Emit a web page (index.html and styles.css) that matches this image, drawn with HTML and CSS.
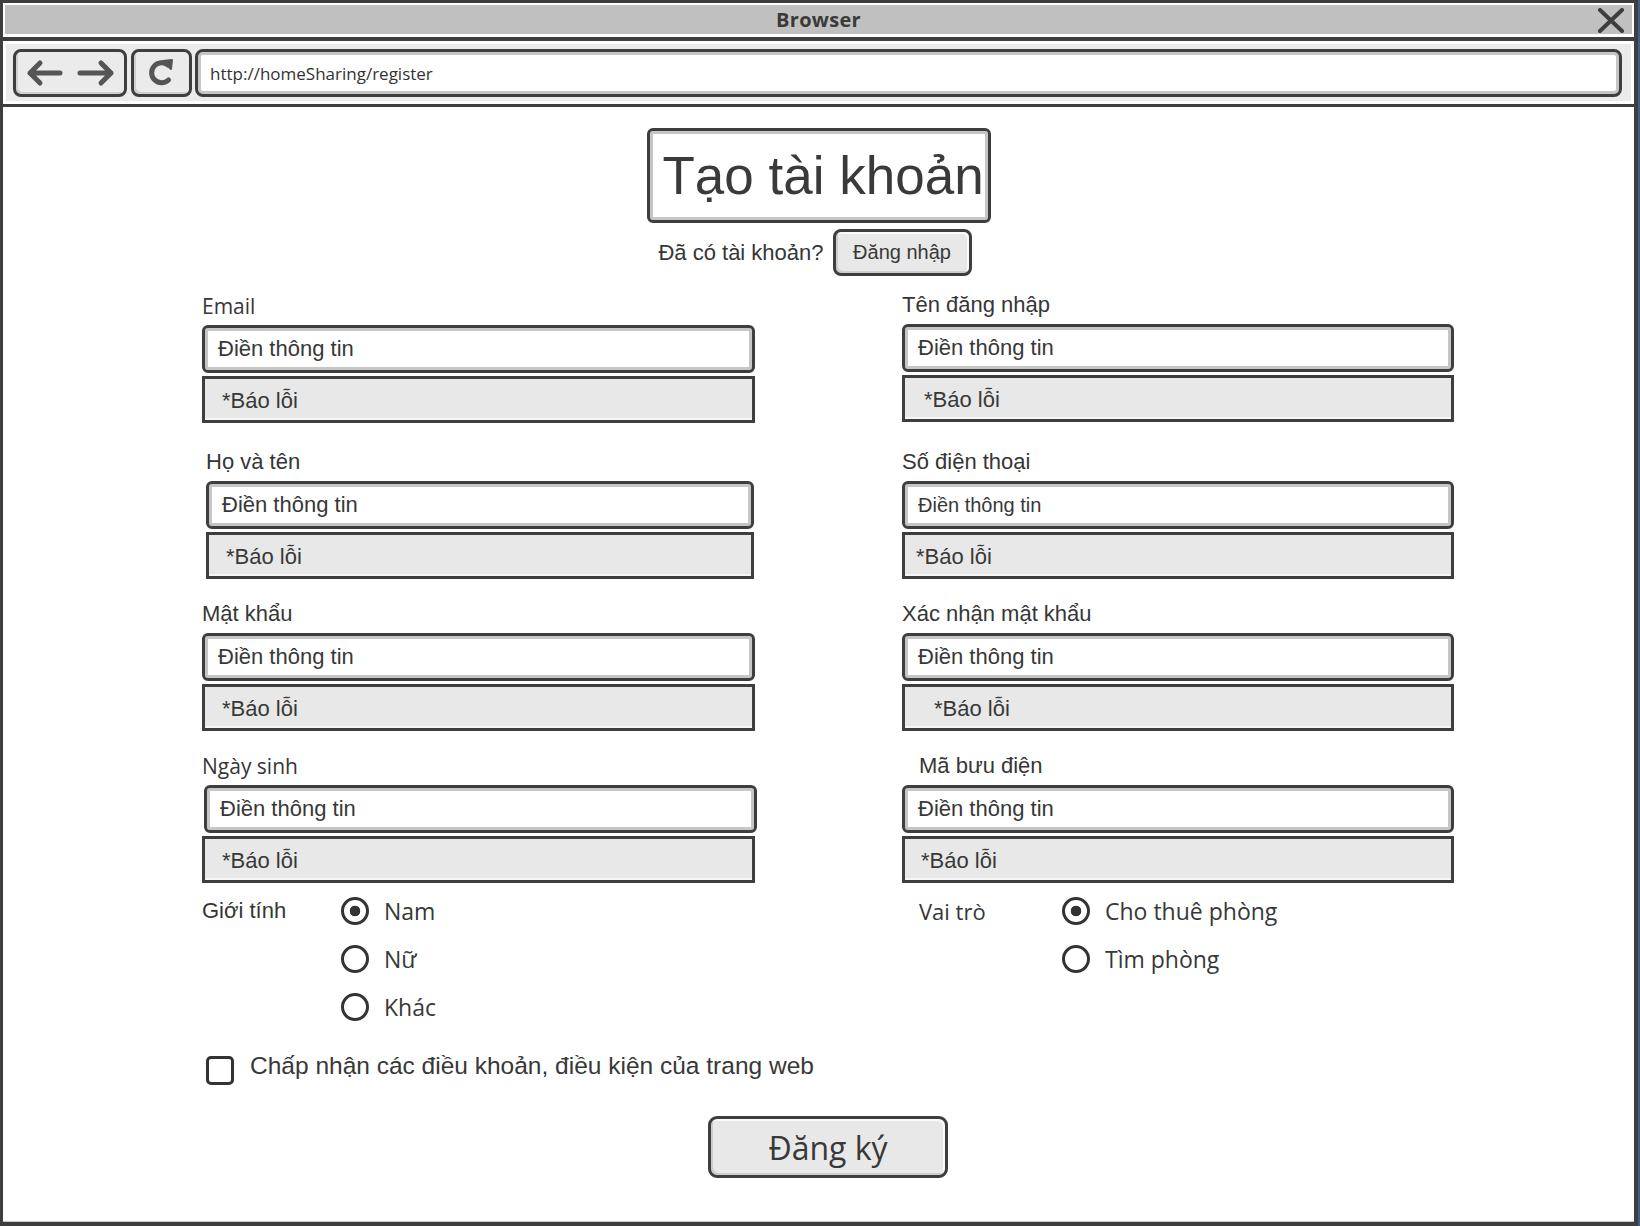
FILE: index.html
```html
<!DOCTYPE html>
<html lang="vi">
<head>
<meta charset="utf-8">
<title>Tạo tài khoản</title>
<link rel="stylesheet" href="styles.css">
</head>
<body>
<div class="window">
  <div class="titlebar">
    <span></span>
    <span class="title">Browser</span>
    <svg class="close" width="28" height="25" viewBox="0 0 28 25" aria-hidden="true">
      <path d="M3 2 L25 23 M25 2 L3 23" stroke="#3e3e3e" stroke-width="4" stroke-linecap="round" fill="none"/>
    </svg>
  </div>
  <div class="toolbar">
    <div class="tool-btn nav-btn">
      <svg width="108" height="42" viewBox="0 0 108 42" aria-hidden="true">
        <g stroke="#555" stroke-width="5" stroke-linecap="round" stroke-linejoin="round" fill="none">
          <path d="M14 21 H44 M24 11 L14 21 L24 31"/>
          <path d="M64 21 H95 M85 11 L95 21 L85 31"/>
        </g>
      </svg>
    </div>
    <div class="tool-btn refresh-btn">
      <svg width="55" height="42" viewBox="0 0 55 42" aria-hidden="true">
        <path d="M34 13 A10 10 0 1 0 34.5 28" stroke="#555" stroke-width="5" stroke-linecap="round" fill="none"/>
        <path d="M29 9 L38 8 L37 17 Z" fill="#555" stroke="#555" stroke-width="2" stroke-linejoin="round"/>
      </svg>
    </div>
    <div class="url">http://homeSharing/register</div>
  </div>

  <main class="content">
    <h1 class="heading">Tạo tài khoản</h1>
    <div class="login-row">
      <span>Đã có tài khoản?</span>
      <button class="btn btn--small" type="button">Đăng nhập</button>
    </div>

    <form class="form">
      <div class="field-grid">
        <div class="field field--first">
          <div class="field-label hand">Email</div>
          <div class="input">Điền thông tin</div>
          <div class="error">*Báo lỗi</div>
        </div>
        <div class="field field--first field--up">
          <div class="field-label">Tên đăng nhập</div>
          <div class="input">Điền thông tin</div>
          <div class="error error--wide">*Báo lỗi</div>
        </div>

        <div class="field field--shift">
          <div class="field-label">Họ và tên</div>
          <div class="input">Điền thông tin</div>
          <div class="error">*Báo lỗi</div>
        </div>
        <div class="field">
          <div class="field-label">Số điện thoại</div>
          <div class="input input--small">Điền thông tin</div>
          <div class="error error--narrow">*Báo lỗi</div>
        </div>

        <div class="field">
          <div class="field-label">Mật khẩu</div>
          <div class="input">Điền thông tin</div>
          <div class="error">*Báo lỗi</div>
        </div>
        <div class="field">
          <div class="field-label">Xác nhận mật khẩu</div>
          <div class="input">Điền thông tin</div>
          <div class="error error--deep">*Báo lỗi</div>
        </div>

        <div class="field">
          <div class="field-label hand">Ngày sinh</div>
          <div class="input input--nudge">Điền thông tin</div>
          <div class="error">*Báo lỗi</div>
        </div>
        <div class="field">
          <div class="field-label field-label--indent">Mã bưu điện</div>
          <div class="input">Điền thông tin</div>
          <div class="error error--mid">*Báo lỗi</div>
        </div>
      </div>

      <div class="choice-grid">
        <div class="choice-group choice-group--gender">
          <div class="choice-label">Giới tính</div>
          <div class="options">
            <div class="option"><span class="radio radio--on"></span><span class="hand">Nam</span></div>
            <div class="option"><span class="radio"></span><span class="hand">Nữ</span></div>
            <div class="option"><span class="radio"></span><span class="hand">Khác</span></div>
          </div>
        </div>
        <div class="choice-group choice-group--role">
          <div class="choice-label hand">Vai trò</div>
          <div class="options">
            <div class="option"><span class="radio radio--on"></span><span class="hand">Cho thuê phòng</span></div>
            <div class="option"><span class="radio"></span><span class="hand">Tìm phòng</span></div>
          </div>
        </div>
      </div>

      <div class="terms">
        <span class="checkbox"></span>
        <span>Chấp nhận các điều khoản, điều kiện của trang web</span>
      </div>

      <div class="submit-row">
        <button class="btn btn--big hand" type="button">Đăng ký</button>
      </div>
    </form>
  </main>
</div>
</body>
</html>
```

FILE: styles.css
```css
html {
  background: #3f5f8a;
}

body {
  margin: 0;
  font-family: "Liberation Sans", Arial, sans-serif;
  color: #363636;
}

.hand {
  font-family: "Open Sans", "DejaVu Sans", sans-serif;
}

.window {
  width: 1638px;
  height: 1226px;
  box-sizing: border-box;
  border: 3px solid #3e3e3e;
  border-right-width: 4px;
  border-bottom-width: 4px;
  background: #fff;
  display: flex;
  flex-direction: column;
}

/* title bar */
.titlebar {
  height: 34px;
  box-sizing: border-box;
  border: 2px solid #fff;
  border-bottom-width: 3px;
  background: #c0c0c0;
  display: grid;
  grid-template-columns: 1fr auto 1fr;
  align-items: center;
}

.title {
  font-family: "Open Sans", "DejaVu Sans", sans-serif;
  font-weight: 700;
  font-size: 20px;
  color: #3a3a3a;
  letter-spacing: 0.3px;
}

.close {
  justify-self: end;
  margin-right: 7px;
  margin-top: 1px;
}

/* toolbar */
.toolbar {
  border-top: 4px solid #3e3e3e;
  border-bottom: 3px solid #3e3e3e;
  padding: 8px 12px 7px 10px;
  background: #ebebeb;
  box-shadow: inset 0 0 0 3px #fff;
  display: flex;
  gap: 4px;
}

.tool-btn {
  height: 48px;
  box-sizing: border-box;
  border: 3px solid #3e3e3e;
  border-radius: 8px;
  background: #ebebeb;
  box-shadow: inset 2px -2px 0 #cfcfcf;
  display: flex;
  align-items: center;
  justify-content: center;
}

.nav-btn {
  width: 114px;
}

.refresh-btn {
  width: 61px;
  margin-right: -1px;
}

.url {
  flex: 1;
  height: 48px;
  box-sizing: border-box;
  border: 3px solid #3e3e3e;
  border-radius: 8px;
  background: #fff;
  box-shadow: inset 0 0 0 3px #c6c6c6;
  padding-left: 12px;
  display: flex;
  align-items: center;
  font-family: "Open Sans", "DejaVu Sans", sans-serif;
  font-size: 17px;
  color: #333;
}

/* content */
.content {
  flex: 1;
  border-bottom: 1px solid #c4c8cc;
  padding-top: 21px;
}

.heading {
  margin: 0 auto;
  width: 344px;
  height: 95px;
  box-sizing: border-box;
  border: 3px solid #3e3e3e;
  border-radius: 6px;
  box-shadow: inset 0 0 0 3px #c6c6c6;
  padding-left: 13px;
  display: flex;
  align-items: center;
  white-space: nowrap;
  font-size: 53px;
  font-weight: 400;
  color: #3a3a3a;
}

.login-row {
  margin-top: 6px;
  display: flex;
  justify-content: center;
  align-items: center;
  gap: 9px;
  font-size: 22px;
  padding-right: 7px;
}

.btn {
  box-sizing: border-box;
  border: 3px solid #3e3e3e;
  background: #e8e8e8;
  box-shadow: inset 2px -2px 0 #cdcdcd, inset -2px 2px 0 #fafafa;
  color: #383838;
  padding: 0;
  font-family: "Liberation Sans", Arial, sans-serif;
}

.btn--small {
  width: 139px;
  height: 47px;
  border-radius: 8px;
  font-size: 20px;
}

.btn--big {
  width: 240px;
  height: 62px;
  border-radius: 9px;
  font-family: "Open Sans", "DejaVu Sans", sans-serif;
  font-size: 32px;
}

/* form */
.form {
  margin: 17px 0 0 199px;
  width: 1252px;
}

.field-grid {
  display: grid;
  grid-template-columns: 553px 552px;
  column-gap: 147px;
  row-gap: 22px;
}

.field--first {
  margin-bottom: 4px;
}

.field--up {
  margin-top: -1px;
  margin-bottom: 5px;
}

.field--shift {
  margin-left: 4px;
  margin-right: 1px;
}

.field-label {
  font-size: 22px;
  line-height: 26px;
  height: 26px;
  margin-bottom: 6px;
}

.field-label.hand {
  font-size: 21px;
}

.field-label--indent {
  padding-left: 17px;
}

.input {
  height: 48px;
  box-sizing: border-box;
  border: 3px solid #3e3e3e;
  border-radius: 6px;
  background: #fff;
  box-shadow: inset 0 0 0 3px #c6c6c6;
  padding-left: 13px;
  display: flex;
  align-items: center;
  font-size: 22px;
  color: #383838;
}

.input--small {
  font-size: 20px;
}

.input--nudge {
  margin-left: 2px;
  margin-right: -2px;
}

.error {
  margin-top: 3px;
  height: 47px;
  box-sizing: border-box;
  border: 3px solid #3e3e3e;
  background: #e8e8e8;
  box-shadow: inset 0 -2px 0 #f6f6f6;
  padding: 3px 0 0 17px;
  display: flex;
  align-items: center;
  font-size: 22px;
  color: #383838;
}

.error--wide { padding-left: 19px; }
.error--narrow { padding-left: 11px; }
.error--deep { padding-left: 29px; }
.error--mid { padding-left: 16px; }

/* radio groups */
.choice-grid {
  margin-top: 4px;
  display: grid;
  grid-template-columns: 553px 552px;
  column-gap: 147px;
}

.choice-group {
  display: grid;
  align-items: start;
}

.choice-group--gender {
  grid-template-columns: 139px 1fr;
}

.choice-group--role {
  grid-template-columns: 143px 1fr;
  padding-left: 17px;
}

.choice-label {
  line-height: 48px;
  font-size: 22px;
}

.choice-label.hand {
  font-size: 22px;
}

.options {
  display: flex;
  flex-direction: column;
}

.option {
  height: 48px;
  display: flex;
  align-items: center;
  gap: 15px;
  font-size: 23px;
  color: #383838;
}

.radio {
  width: 28px;
  height: 28px;
  box-sizing: border-box;
  border: 3px solid #333;
  border-radius: 50%;
  flex: none;
}

.radio--on {
  background: radial-gradient(circle, #333 0 5px, transparent 5.6px);
}

.terms {
  margin: 20px 0 0 4px;
  display: flex;
  align-items: flex-start;
  gap: 16px;
  font-size: 24.5px;
  line-height: 30px;
  color: #383838;
}

.checkbox {
  margin-top: 5px;
  width: 28px;
  height: 29px;
  box-sizing: border-box;
  border: 3px solid #333;
  border-radius: 5px;
  flex: none;
}

.submit-row {
  margin-top: 31px;
  display: flex;
  justify-content: center;
}
```
